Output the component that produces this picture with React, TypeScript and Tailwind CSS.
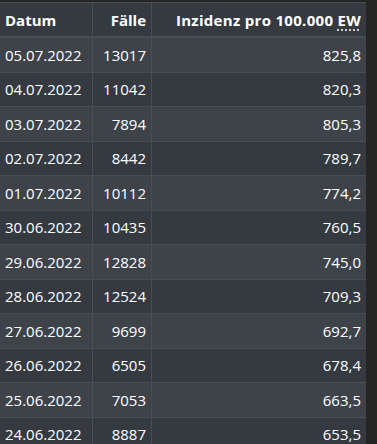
const rows: [string, string, string][] = [
  ["05.07.2022", "13017", "825,8"],
  ["04.07.2022", "11042", "820,3"],
  ["03.07.2022", "7894", "805,3"],
  ["02.07.2022", "8442", "789,7"],
  ["01.07.2022", "10112", "774,2"],
  ["30.06.2022", "10435", "760,5"],
  ["29.06.2022", "12828", "745,0"],
  ["28.06.2022", "12524", "709,3"],
  ["27.06.2022", "9699", "692,7"],
  ["26.06.2022", "6505", "678,4"],
  ["25.06.2022", "7053", "663,5"],
  ["24.06.2022", "8887", "653,5"],
];

export default function App() {
  return (
    <div
      className="w-[377px] h-[444px] overflow-hidden bg-[#252525] pt-[2px] text-white"
      style={{ fontFamily: '"Open Sans", "Noto Sans", sans-serif' }}
    >
      <div className="w-[366px] overflow-hidden">
        <table className="-ml-px w-[367px] border-collapse table-fixed text-[15px] leading-[24px]">
          <colgroup>
            <col className="w-[93px]" />
            <col className="w-[59px]" />
            <col className="w-[215px]" />
          </colgroup>
          <thead>
            <tr className="bg-[#343a40]">
              <th className="border border-b-2 border-[#454d55] px-[5px] py-[4.5px] text-left font-bold">
                Datum
              </th>
              <th className="border border-b-2 border-[#454d55] px-[5px] py-[4.5px] text-right font-bold">
                Fälle
              </th>
              <th className="border border-b-2 border-[#454d55] px-[5px] py-[4.5px] text-right font-bold whitespace-nowrap tracking-[0.3px]">
                Inzidenz pro 100.000{" "}
                <abbr
                  title="Einwohner"
                  className="underline decoration-dotted underline-offset-[4px]"
                >
                  EW
                </abbr>
              </th>
            </tr>
          </thead>
          <tbody>
            {rows.map(([d, f, i], idx) => (
              <tr
                key={d}
                className={idx % 2 === 0 ? "bg-[#3e434a]" : "bg-[#343a40]"}
              >
                <td className="border border-[#454d55] px-[5px] py-[4.75px] text-left">
                  {d}
                </td>
                <td className="border border-[#454d55] px-[5px] py-[4.75px] text-right">
                  {f}
                </td>
                <td className="border border-[#454d55] px-[5px] py-[4.75px] text-right">
                  {i}
                </td>
              </tr>
            ))}
          </tbody>
        </table>
      </div>
    </div>
  );
}
